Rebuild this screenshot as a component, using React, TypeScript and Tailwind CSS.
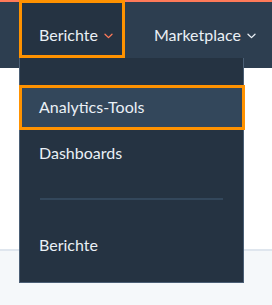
import React from "react";

function Chevron({ className }: { className?: string }) {
  return (
    <svg width="9" height="6" viewBox="0 0 9 6" className={className} fill="none">
      <path d="M1 1.2 L4.5 4.6 L8 1.2" stroke="currentColor" strokeWidth="1.3" strokeLinecap="round" strokeLinejoin="round" />
    </svg>
  );
}

export default function App() {
  return (
    <div className="relative h-[305px] w-[272px] overflow-hidden bg-white font-['Lato',sans-serif]">
      <nav className="flex h-[68px] items-start border-t-2 border-[#ff7a59] bg-[#2d3e50]">
        <div className="ml-[19px] -mt-[2px] flex h-[58px] w-[106px] items-center border-[3px] border-[#ff9200] bg-[#253342] pt-[12px] pl-[17px] text-[16px] text-[#eaf0f6]">
          <span>Berichte</span>
          <Chevron className="ml-[6px] mt-[2px] text-[#ff7a59]" />
        </div>
        <div className="ml-[8px] flex h-[56px] items-center pt-[10px] pl-[21px] text-[16px] text-[#eaf0f6]">
          <span>Marketplace</span>
          <Chevron className="ml-[6px] mt-[2px] text-[#eaf0f6]" />
        </div>
      </nav>

      <div className="h-[181px] bg-white" />
      <div className="h-[2px] bg-[#dfe6ee]" />
      <div className="h-[54px] bg-[#f5f8fa]" />

      {/* dropdown */}
      <div className="absolute left-[19px] top-[58px] w-[225px] border-x border-b border-[#4b5f75] bg-[#253342] pt-[27px] pb-[15px] text-[16px] text-[#eaf0f6]">
        <div className="-ml-px flex h-[45px] w-[226px] items-center border-[3px] border-[#ff9200] bg-[#33475b] pb-px pl-[17px]">
          Analytics-Tools
        </div>
        <div className="flex h-[45px] items-center pl-[19px]">Dashboards</div>
        <div className="mx-[20px] mt-[23px] h-[2px] bg-[#33475b]" />
        <div className="mt-[22px] flex h-[45px] items-center pl-[19px]">Berichte</div>
      </div>
    </div>
  );
}
